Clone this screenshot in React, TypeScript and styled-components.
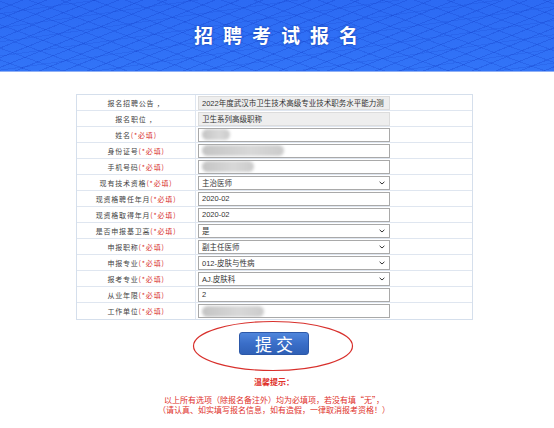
import React from "react";
import styled, { createGlobalStyle } from "styled-components";

const GlobalStyle = createGlobalStyle`
  html, body {
    margin: 0;
    padding: 0;
    background: #ffffff;
  }
  body {
    font-family: "Liberation Sans", "Noto Sans CJK SC", sans-serif;
  }
`;

type Row = {
  label: string;
  required?: boolean;
  kind: "readonly" | "input" | "select" | "blur";
  value?: string;
  blur?: number;
};

const rows: Row[] = [
  { label: "报名招聘公告 ，", kind: "readonly", value: "2022年度武汉市卫生技术高级专业技术职务水平能力测" },
  { label: "报名职位 ，", kind: "readonly", value: "卫生系列高级职称" },
  { label: "姓名", required: true, kind: "blur", blur: 28 },
  { label: "身份证号", required: true, kind: "blur", blur: 82 },
  { label: "手机号码", required: true, kind: "blur", blur: 52 },
  { label: "现有技术资格", required: true, kind: "select", value: "主治医师" },
  { label: "现资格聘任年月", required: true, kind: "input", value: "2020-02" },
  { label: "现资格取得年月", required: true, kind: "input", value: "2020-02" },
  { label: "是否申报基卫高", required: true, kind: "select", value: "是" },
  { label: "申报职称", required: true, kind: "select", value: "副主任医师" },
  { label: "申报专业", required: true, kind: "select", value: "012-皮肤与性病" },
  { label: "报考专业", required: true, kind: "select", value: "AJ.皮肤科" },
  { label: "从业年限", required: true, kind: "input", value: "2" },
  { label: "工作单位", required: true, kind: "blur", blur: 62 },
];

export default function App() {
  return (
    <>
      <GlobalStyle />
      <Banner>
        <Title>招聘考试报名</Title>
      </Banner>

      <FormTable>
        {rows.map((row) => (
          <TableRow key={row.label}>
            <LabelCell>
              {row.label}
              {row.required && <Required>(*必填)</Required>}
            </LabelCell>
            <ValueCell>
              <Field readOnly={row.kind === "readonly"}>
                {row.kind === "blur" ? (
                  <Blur width={row.blur || 30} />
                ) : (
                  <FieldText>{row.value}</FieldText>
                )}
                {row.kind === "select" && (
                  <Chevron width="6" height="4" viewBox="0 0 6 4">
                    <path d="M0.6 0.8 L3 3 L5.4 0.8" fill="none" stroke="#333" strokeWidth="1" />
                  </Chevron>
                )}
              </Field>
            </ValueCell>
          </TableRow>
        ))}
      </FormTable>

      <SubmitArea>
        <Ring width="162" height="52" viewBox="0 0 162 52">
          <ellipse cx="81" cy="26" rx="79.5" ry="24.5" fill="none" stroke="#d8302c" strokeWidth="1.2" />
        </Ring>
        <SubmitButton>提交</SubmitButton>
      </SubmitArea>

      <Notice>
        <NoticeTitle>温馨提示：</NoticeTitle>
        <NoticeLine>以上所有选项（除报名备注外）均为必填项，若没有填“无”，</NoticeLine>
        <NoticeLine>（请认真、如实填写报名信息，如有造假，一律取消报考资格！）</NoticeLine>
      </Notice>
    </>
  );
}

const Banner = styled.div`
  height: 71px;
  border-bottom: 1px solid #8fb0f5;
  display: flex;
  align-items: center;
  justify-content: center;
  background:
    repeating-linear-gradient(158deg, transparent 0 8px, rgba(18, 62, 200, 0.3) 8px 9px),
    repeating-linear-gradient(20deg, transparent 0 10px, rgba(18, 62, 200, 0.25) 10px 11px),
    repeating-linear-gradient(172deg, transparent 0 13px, rgba(18, 62, 200, 0.18) 13px 14px),
    linear-gradient(180deg, #2c6af3 0%, #3274f7 100%);
`;

const Title = styled.h1`
  margin: 0 0 2px 8px;
  font-family: "Noto Sans CJK SC", sans-serif;
  font-weight: 700;
  font-size: 19px;
  letter-spacing: 10px;
  color: #ffffff;
  text-shadow: 0 0 3px rgba(0, 20, 90, 0.45);
`;

const FormTable = styled.div`
  width: 395px;
  margin: 22px 0 0 76px;
  border: 1px solid #d5dfec;
  display: flex;
  flex-direction: column;
`;

const TableRow = styled.div`
  display: flex;
  height: 16px;
  border-bottom: 1px solid #dfe6f0;
  box-sizing: border-box;
  &:last-child {
    border-bottom: none;
  }
`;

const LabelCell = styled.div`
  width: 118px;
  flex-shrink: 0;
  border-right: 1px solid #dfe6f0;
  display: flex;
  align-items: center;
  justify-content: center;
  font-family: "Noto Sans CJK SC", sans-serif;
  font-size: 7px;
  letter-spacing: 0.8px;
  color: #444;
  white-space: nowrap;
`;

const Required = styled.span`
  color: #d8302c;
`;

const ValueCell = styled.div`
  flex: 1;
  display: flex;
  align-items: center;
  padding-left: 2px;
`;

const Field = styled.div<{ readOnly?: boolean }>`
  width: 192px;
  height: 14px;
  box-sizing: border-box;
  border: 1px solid ${(p) => (p.readOnly ? "#dcdcdc" : "#a9a9a9")};
  background: ${(p) => (p.readOnly ? "#eeeeee" : "#ffffff")};
  display: flex;
  align-items: center;
  padding: 0 4px 0 3px;
  overflow: hidden;
  position: relative;
`;

const FieldText = styled.span`
  font-family: "Liberation Sans", "Noto Sans CJK SC", sans-serif;
  font-size: 7.5px;
  color: #333;
  white-space: nowrap;
  flex: 1;
`;

const Blur = styled.span<{ width: number }>`
  display: block;
  width: ${(p) => p.width}px;
  height: 11px;
  border-radius: 6px;
  background: linear-gradient(90deg, #c4c4c4, #d8d8d8 60%, #cbcbcb);
  filter: blur(1.5px);
`;

const Chevron = styled.svg`
  flex-shrink: 0;
  margin-left: auto;
`;

const SubmitArea = styled.div`
  position: relative;
  display: flex;
  justify-content: center;
  padding: 12px 0 0;
  margin-left: -6px;
`;

const Ring = styled.svg`
  position: absolute;
  top: 0;
  left: calc(50% - 82px);
  pointer-events: none;
`;

const SubmitButton = styled.button`
  width: 70px;
  height: 23px;
  border: 1px solid #2c58a8;
  border-radius: 3px;
  background: linear-gradient(180deg, #4f86dc 0%, #3a6ec8 50%, #2f60b6 100%);
  color: #ffffff;
  font-family: "Noto Sans CJK SC", sans-serif;
  font-size: 17px;
  letter-spacing: 4px;
  padding: 0 0 0 4px;
  line-height: 20px;
  cursor: pointer;
`;

const Notice = styled.div`
  margin-top: 22px;
  display: flex;
  flex-direction: column;
  align-items: center;
  font-family: "Noto Sans CJK SC", sans-serif;
  color: #e0302a;
  margin-left: -6px;
`;

const NoticeTitle = styled.div`
  font-size: 8px;
  font-weight: 700;
  line-height: 10px;
  margin-bottom: 8px;
`;

const NoticeLine = styled.div`
  font-size: 8px;
  line-height: 10px;
  white-space: nowrap;
`;
